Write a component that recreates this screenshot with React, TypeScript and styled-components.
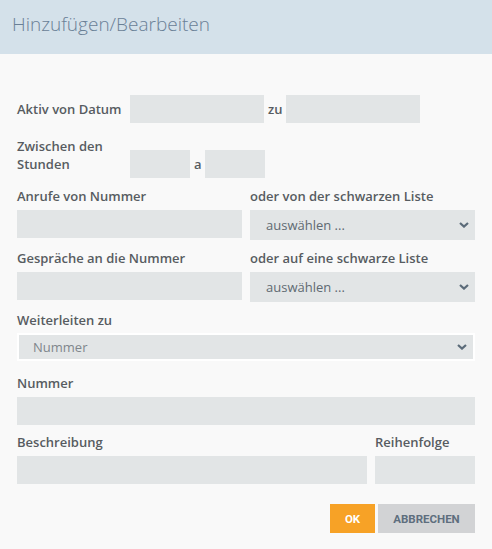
import React from 'react';
import styled, { createGlobalStyle } from 'styled-components';

const GlobalStyle = createGlobalStyle`
  html, body {
    margin: 0;
    padding: 0;
    background: #f9f9f9;
  }
  body {
    font-family: 'Open Sans', 'Noto Sans', sans-serif;
  }
`;

type RowProps = { top: number };
type WidthProps = { w?: number };
type SelectProps = { h: number; framed?: boolean; muted?: boolean };

const Dialog = styled.div`
  width: 492px;
  height: 549px;
  background: #f9f9f9;
`;

const Header = styled.div`
  box-sizing: border-box;
  height: 54px;
  padding: 11px 12px 0;
  background: #d4e1ea;
`;

const Title = styled.h2`
  margin: 0;
  font-size: 19px;
  line-height: 26px;
  font-weight: 300;
  color: #6a8096;
`;

const Body = styled.div`
  padding: 41px 17px 0;
`;

const InlineRow = styled.div<RowProps>`
  display: flex;
  align-items: flex-start;
  margin-top: ${p => p.top}px;
`;

const InlineLabel = styled.label<{ pad: number }>`
  width: 113px;
  flex: none;
  padding-top: ${p => p.pad}px;
  font-size: 13px;
  line-height: 18px;
  font-weight: 600;
  color: #575c61;
`;

const InlineGroup = styled.div<{ top: number }>`
  display: flex;
  align-items: center;
  margin-top: ${p => p.top}px;
`;

const Sep = styled.span<{ l: number; r: number }>`
  margin: 0 ${p => p.r}px 0 ${p => p.l}px;
  font-size: 13px;
  font-weight: 600;
  color: #575c61;
`;

const Input = styled.input<WidthProps>`
  box-sizing: border-box;
  display: block;
  width: ${p => (p.w ? `${p.w}px` : '100%')};
  height: 28px;
  border: none;
  border-radius: 0;
  background: #e2e5e6;
  outline: none;
  padding: 0 10px;
  font-family: inherit;
`;

const Grid = styled.div<RowProps & { cols: string }>`
  display: grid;
  grid-template-columns: ${p => p.cols};
  column-gap: 8px;
  margin-top: ${p => p.top}px;
`;

const Field = styled.div`
  display: flex;
  flex-direction: column;
`;

const Label = styled.label<{ gap?: number }>`
  display: block;
  margin-bottom: ${p => p.gap ?? 5}px;
  font-size: 13px;
  line-height: 18px;
  font-weight: 600;
  color: #575c61;
  white-space: nowrap;
`;

const SelectWrap = styled.div<SelectProps>`
  position: relative;
  box-sizing: border-box;
  height: ${p => p.h}px;
  border: ${p => (p.framed ? '2px solid #ffffff' : 'none')};
`;

const Select = styled.select<{ muted?: boolean }>`
  appearance: none;
  -webkit-appearance: none;
  box-sizing: border-box;
  display: block;
  width: 100%;
  height: 100%;
  border: none;
  border-radius: 0;
  background: #e2e5e6;
  outline: none;
  padding: 0 30px 0 ${p => (p.muted ? 14 : 16)}px;
  font-family: 'Open Sans', sans-serif;
  font-size: 13px;
  color: ${p => (p.muted ? '#7f868c' : '#5f6a72')};
`;

const Chevron = styled.svg`
  position: absolute;
  right: 6px;
  top: 50%;
  margin-top: -3px;
  width: 10px;
  height: 6px;
  pointer-events: none;
`;

const Actions = styled.div`
  display: flex;
  justify-content: flex-end;
  gap: 3px;
  margin-top: 20px;
`;

const Button = styled.button<{ primary?: boolean; w: number }>`
  box-sizing: border-box;
  width: ${p => p.w}px;
  height: 29px;
  border: none;
  border-radius: 0;
  padding: 0;
  background: ${p => (p.primary ? '#f7a226' : '#d2d3d5')};
  color: ${p => (p.primary ? '#ffffff' : '#5e6e7e')};
  font-family: Roboto, 'Liberation Sans', sans-serif;
  font-size: 11.5px;
  font-weight: 700;
  cursor: pointer;
`;

const Dropdown = ({
  h,
  framed,
  muted,
  value,
}: {
  h: number;
  framed?: boolean;
  muted?: boolean;
  value: string;
}) => (
  <SelectWrap h={h} framed={framed}>
    <Select muted={muted} defaultValue={value}>
      <option>{value}</option>
    </Select>
    <Chevron viewBox="0 0 10 6">
      <path d="M1 1l4 3.6L9 1" fill="none" stroke="#5b6b79" strokeWidth="2.2" />
    </Chevron>
  </SelectWrap>
);

export default function App() {
  return (
    <>
      <GlobalStyle />
      <Dialog>
        <Header>
          <Title>Hinzufügen/Bearbeiten</Title>
        </Header>
        <Body>
          <InlineRow top={0}>
            <InlineLabel pad={5}>Aktiv von Datum</InlineLabel>
            <InlineGroup top={0}>
              <Input w={134} />
              <Sep l={4} r={4}>zu</Sep>
              <Input w={134} />
            </InlineGroup>
          </InlineRow>

          <InlineRow top={14}>
            <InlineLabel pad={0}>Zwischen den Stunden</InlineLabel>
            <InlineGroup top={13}>
              <Input w={60} />
              <Sep l={4} r={3}>a</Sep>
              <Input w={60} />
            </InlineGroup>
          </InlineRow>

          <Grid top={9} cols="1fr 1fr">
            <Field>
              <Label>Anrufe von Nummer</Label>
              <Input />
            </Field>
            <Field>
              <Label>oder von der schwarzen Liste</Label>
              <Dropdown h={30} value="auswählen ..." />
            </Field>
          </Grid>

          <Grid top={9} cols="1fr 1fr">
            <Field>
              <Label>Gespräche an die Nummer</Label>
              <Input />
            </Field>
            <Field>
              <Label>oder auf eine schwarze Liste</Label>
              <Dropdown h={30} value="auswählen ..." />
            </Field>
          </Grid>

          <Grid top={9} cols="1fr">
            <Field>
              <Label gap={4}>Weiterleiten zu</Label>
              <Dropdown h={28} framed muted value="Nummer" />
            </Field>
          </Grid>

          <Grid top={13} cols="1fr">
            <Field>
              <Label>Nummer</Label>
              <Input />
            </Field>
          </Grid>

          <Grid top={8} cols="350px 100px">
            <Field>
              <Label>Beschreibung</Label>
              <Input />
            </Field>
            <Field>
              <Label>Reihenfolge</Label>
              <Input />
            </Field>
          </Grid>

          <Actions>
            <Button primary w={45}>OK</Button>
            <Button w={97}>ABBRECHEN</Button>
          </Actions>
        </Body>
      </Dialog>
    </>
  );
}
